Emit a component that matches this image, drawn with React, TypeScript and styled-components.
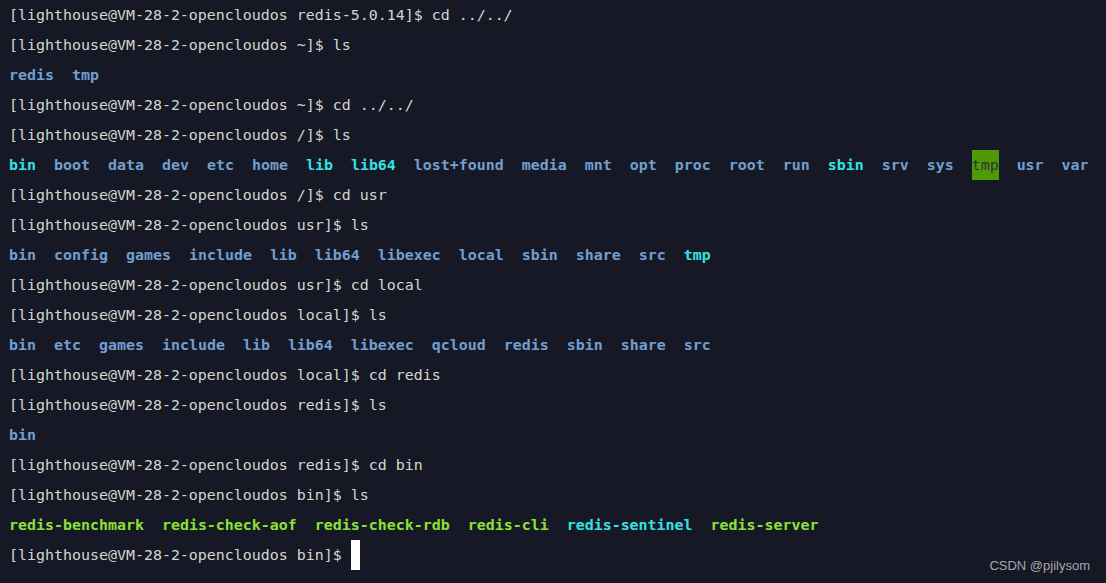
import React from "react";
import styled, { createGlobalStyle } from "styled-components";

const Global = createGlobalStyle`
  html, body { margin: 0; padding: 0; background: #161925; }
  #root { width: 1106px; height: 583px; }
`;

const Terminal = styled.div`
  position: relative;
  width: 1106px;
  height: 583px;
  box-sizing: border-box;
  padding: 0 0 0 9px;
  background: #161925;
  color: #d3d7cf;
  font-family: "DejaVu Sans Mono", "Liberation Mono", monospace;
  font-size: 14.95px;
  overflow: hidden;
`;

const Line = styled.div`
  height: 30px;
  line-height: 30px;
  white-space: pre;
`;

type Kind = "dir" | "cyan" | "exe" | "sticky";

const colors: Record<Kind, string> = {
  dir: "#729fcf",
  cyan: "#34e2e2",
  exe: "#8ae234",
  sticky: "#2e3436",
};

const Item = styled.span<{ $kind: Kind }>`
  color: ${(p) => colors[p.$kind]};
  font-weight: ${(p) => (p.$kind === "sticky" ? "normal" : "bold")};
  ${(p) =>
    p.$kind === "sticky"
      ? `background: #4e9a06; display: inline-block; height: 30px; vertical-align: top;`
      : ""}
`;

const Cursor = styled.span`
  display: inline-block;
  width: 9px;
  height: 30px;
  background: #ffffff;
  vertical-align: top;
`;

const Watermark = styled.div`
  position: absolute;
  right: 16px;
  bottom: 10px;
  font-family: "Liberation Sans", Arial, sans-serif;
  font-size: 13px;
  color: #a5a7ad;
`;

const P = "[lighthouse@VM-28-2-opencloudos ";

type Entry = [string, Kind];

const Listing: React.FC<{ items: Entry[] }> = ({ items }) => (
  <Line>
    {items.map(([name, kind], i) => (
      <React.Fragment key={name}>
        {i > 0 ? "  " : ""}
        <Item $kind={kind}>{name}</Item>
      </React.Fragment>
    ))}
  </Line>
);

export default function App() {
  return (
    <>
      <Global />
      <Terminal>
        <Line>{P}redis-5.0.14]$ cd ../../</Line>
        <Line>{P}~]$ ls</Line>
        <Listing items={[["redis", "dir"], ["tmp", "dir"]]} />
        <Line>{P}~]$ cd ../../</Line>
        <Line>{P}/]$ ls</Line>
        <Listing
          items={[
            ["bin", "cyan"],
            ["boot", "dir"],
            ["data", "dir"],
            ["dev", "dir"],
            ["etc", "dir"],
            ["home", "dir"],
            ["lib", "cyan"],
            ["lib64", "cyan"],
            ["lost+found", "dir"],
            ["media", "dir"],
            ["mnt", "dir"],
            ["opt", "dir"],
            ["proc", "dir"],
            ["root", "dir"],
            ["run", "dir"],
            ["sbin", "cyan"],
            ["srv", "dir"],
            ["sys", "dir"],
            ["tmp", "sticky"],
            ["usr", "dir"],
            ["var", "dir"],
          ]}
        />
        <Line>{P}/]$ cd usr</Line>
        <Line>{P}usr]$ ls</Line>
        <Listing
          items={[
            ["bin", "dir"],
            ["config", "dir"],
            ["games", "dir"],
            ["include", "dir"],
            ["lib", "dir"],
            ["lib64", "dir"],
            ["libexec", "dir"],
            ["local", "dir"],
            ["sbin", "dir"],
            ["share", "dir"],
            ["src", "dir"],
            ["tmp", "cyan"],
          ]}
        />
        <Line>{P}usr]$ cd local</Line>
        <Line>{P}local]$ ls</Line>
        <Listing
          items={[
            ["bin", "dir"],
            ["etc", "dir"],
            ["games", "dir"],
            ["include", "dir"],
            ["lib", "dir"],
            ["lib64", "dir"],
            ["libexec", "dir"],
            ["qcloud", "dir"],
            ["redis", "dir"],
            ["sbin", "dir"],
            ["share", "dir"],
            ["src", "dir"],
          ]}
        />
        <Line>{P}local]$ cd redis</Line>
        <Line>{P}redis]$ ls</Line>
        <Listing items={[["bin", "dir"]]} />
        <Line>{P}redis]$ cd bin</Line>
        <Line>{P}bin]$ ls</Line>
        <Listing
          items={[
            ["redis-benchmark", "exe"],
            ["redis-check-aof", "exe"],
            ["redis-check-rdb", "exe"],
            ["redis-cli", "exe"],
            ["redis-sentinel", "cyan"],
            ["redis-server", "exe"],
          ]}
        />
        <Line>
          {P}bin]$ <Cursor />
        </Line>
        <Watermark>CSDN @pjilysom</Watermark>
      </Terminal>
    </>
  );
}
